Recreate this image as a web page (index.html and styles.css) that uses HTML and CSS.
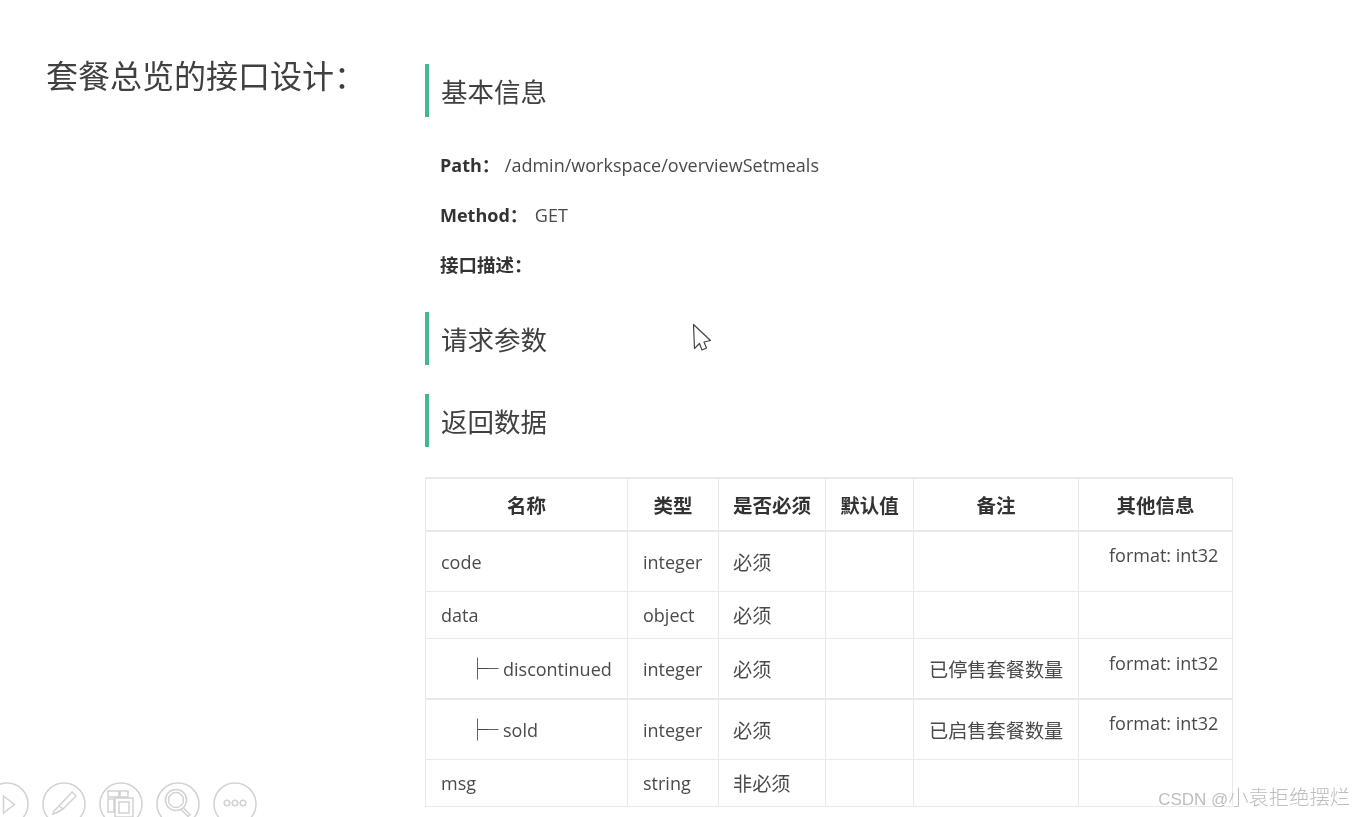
FILE: index.html
```html
<!DOCTYPE html>
<html lang="zh-CN">
<head>
<meta charset="utf-8">
<title>套餐总览的接口设计</title>
<link rel="stylesheet" href="styles.css">
</head>
<body>
<div class="slide">
  <h1 class="slide-title">套餐总览的接口设计：</h1>
  <main class="doc">
    <h2 class="sec">基本信息</h2>
    <p class="info first"><b>Path：</b><span class="val path">/admin/workspace/overviewSetmeals</span></p>
    <p class="info"><b>Method：</b><span class="val get">GET</span></p>
    <p class="info"><b class="zh-b">接口描述：</b></p>
    <h2 class="sec req">请求参数</h2>
    <h2 class="sec ret">返回数据</h2>
    <table class="tbl">
      <colgroup>
        <col class="c1"><col class="c2"><col class="c3"><col class="c4"><col class="c5"><col class="c6">
      </colgroup>
      <thead>
        <tr><th>名称</th><th>类型</th><th>是否必须</th><th>默认值</th><th>备注</th><th>其他信息</th></tr>
      </thead>
      <tbody>
        <tr class="r1"><td>code</td><td>integer</td><td class="zh">必须</td><td></td><td></td><td class="other">format: int32</td></tr>
        <tr class="r2"><td>data</td><td>object</td><td class="zh">必须</td><td></td><td></td><td></td></tr>
        <tr class="r3"><td><span class="tree">├─</span>discontinued</td><td>integer</td><td class="zh">必须</td><td></td><td class="zh note">已停售套餐数量</td><td class="other">format: int32</td></tr>
        <tr class="r4"><td><span class="tree">├─</span>sold</td><td>integer</td><td class="zh">必须</td><td></td><td class="zh note">已启售套餐数量</td><td class="other">format: int32</td></tr>
        <tr class="r5"><td>msg</td><td>string</td><td class="zh">非必须</td><td></td><td></td><td></td></tr>
      </tbody>
    </table>
  </main>

  <svg class="cursor" width="20" height="30" viewBox="0 0 20 30" aria-hidden="true">
    <path d="M1.500 1.500 L2.500 25.500 L7.500 20.500 L10 27 L14.500 25 L12 19 L18.500 17.500 Z" fill="#fff" stroke="#444" stroke-width="1.200" stroke-linejoin="round"/>
  </svg>

  <div class="ctrls" aria-hidden="true">
    <svg class="ctrl" width="44" height="44" viewBox="0 0 44 44"><circle cx="22" cy="22" r="21"/><path d="M18.500 14 L29.500 22.500 L18.500 31 Z"/></svg>
    <svg class="ctrl" width="44" height="44" viewBox="0 0 44 44"><circle cx="22" cy="22" r="21"/><path d="M30 10 L34 14 L21 27 L17 24 Z M17 24 L12 29 L11 32 L14 31 L21 27"/></svg>
    <svg class="ctrl" width="44" height="44" viewBox="0 0 44 44"><circle cx="22" cy="22" r="21"/><path d="M9 9 H20 V15 H9 Z M21 9 H29 V15 H21 Z M9 17 H15 V30 H9 Z M16 16 H34 V35 H16 Z M20 20 H30 V31 H20 Z"/></svg>
    <svg class="ctrl" width="44" height="44" viewBox="0 0 44 44"><circle cx="22" cy="22" r="21"/><circle cx="20" cy="18" r="10.500"/><circle cx="20" cy="18" r="7.500"/><path d="M27.500 26 L34 32.500 L32 34.500 L25.500 28"/></svg>
    <svg class="ctrl" width="44" height="44" viewBox="0 0 44 44"><circle cx="22" cy="22" r="21"/><circle cx="14" cy="21" r="2.800"/><circle cx="22" cy="21" r="2.800"/><circle cx="30" cy="21" r="2.800"/></svg>
  </div>

  <div class="mark">CSDN @<span class="mark-zh">小袁拒绝摆烂</span></div>
</div>
</body>
</html>
```
FILE: styles.css
```css
* { box-sizing: border-box; }
html, body { margin: 0; padding: 0; background: #fff; }
body {
  font-family: "Open Sans", "Noto Sans CJK SC", sans-serif;
  color: #444;
  overflow: hidden;
}
.slide {
  position: relative;
  width: 1365px;
  height: 817px;
  display: flex;
  align-items: flex-start;
  overflow: hidden;
  filter: blur(0.4px);
}
.slide-title {
  width: 425px;
  flex: none;
  margin: 52px 0 0;
  padding-left: 46px;
  font-size: 32px;
  line-height: 44px;
  font-weight: 400;
  color: #404040;
  white-space: nowrap;
  font-family: "Noto Sans CJK SC", sans-serif;
}
.doc { width: 810px; flex: none; padding-top: 64px; }
.sec {
  height: 53px;
  margin: 0;
  border-left: 4px solid #42b98d;
  padding-left: 12px;
  font-size: 26.500px;
  line-height: 53px;
  font-weight: 400;
  color: #404040;
  font-family: "Noto Sans CJK SC", sans-serif;
}
.sec.req { margin-top: 22px; }
.sec.ret { margin-top: 29px; }
.info {
  height: 50px;
  margin: 0;
  padding-left: 15px;
  font-size: 18px;
  line-height: 50px;
  color: #4a4a4a;
  white-space: nowrap;
}
.info.first { margin-top: 23px; }
.info b { color: #333; font-weight: 700; }
.val.path { margin-left: 5px; }
.val.get { margin-left: 7px; }
.zh-b { font-size: 18.500px; }
.tbl {
  margin-top: 30px;
  width: 807px;
  table-layout: fixed;
  border-collapse: collapse;
  font-size: 18px;
  color: #4a4a4a;
}
.c1 { width: 202px; } .c2 { width: 91px; } .c3 { width: 107px; }
.c4 { width: 88px; } .c5 { width: 165px; } .c6 { width: 154px; }
.tbl th, .tbl td {
  border: 1px solid #e9e9e9;
  padding: 1px 0 0 15px;
  white-space: nowrap;
  vertical-align: middle;
  text-align: left;
}
.tbl thead tr { height: 53px; }
.tbl th {
  padding: 0 0 1px;
  text-align: center;
  color: #333;
  font-size: 19.500px;
  font-weight: 700;
  border-top-width: 2px;
  border-bottom-width: 2px;
}
.tbl td.zh { font-size: 19.200px; padding-left: 14px; }
.tbl td.note { padding-left: 15px; }
.r1 { height: 60px; } .r2 { height: 47px; } .r3 { height: 61px; } .r4 { height: 60px; } .r5 { height: 47px; }
.r3 td { border-bottom-width: 2px; }
.tree {
  display: inline-block;
  width: 36px;
  margin-left: 26px;
  letter-spacing: -10.500px;
  font-size: 21px;
  line-height: 18px;
  color: #444;
}
.tbl td.other { vertical-align: top; padding: 9px 0 0 30px; line-height: 28px; }
.tbl .r3 td.other { padding-top: 10px; }
.cursor { position: absolute; left: 692px; top: 323px; }
.ctrls { position: absolute; left: -15px; top: 782px; display: flex; gap: 13px; }
.ctrl { flex: none; fill: none; stroke: #d2d2d2; stroke-width: 1.500; }
.mark {
  position: absolute;
  right: 15px;
  top: 785px;
  font-family: "Liberation Sans", "Noto Sans CJK SC", sans-serif;
  font-size: 17px;
  line-height: 26px;
  color: #bdbdbd;
  white-space: nowrap;
}
.mark-zh { font-size: 20.300px; font-weight: 300; }
```
